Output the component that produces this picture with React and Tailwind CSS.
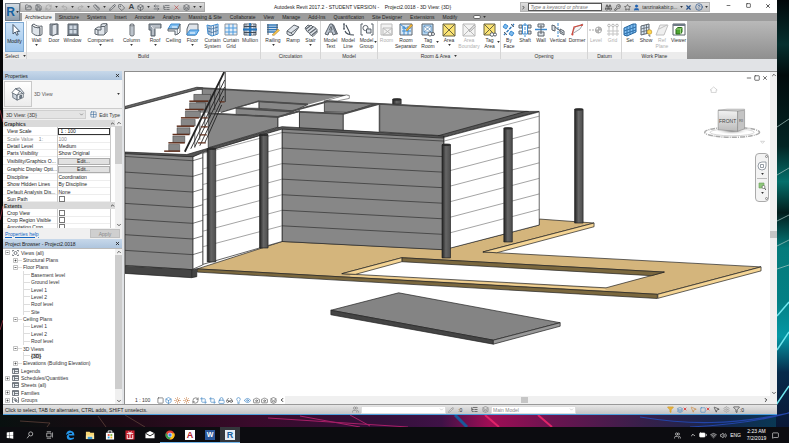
import React, { useState } from "react";
import {
    ArrowLeftRight, Battery, Binoculars, Box, Camera, ChevronDown, ChevronLeft, ChevronRight, ChevronUp,
    CircleHelp, Crop, Eye, FolderOpen, Funnel, Glasses, Grid2x2, KeyRound, Layers, Lightbulb, ListTree,
    Lock, MessageSquare, Minus, MousePointer2, Pencil, Redo2, RefreshCw, Ruler, Save, Settings,
    Square, Star, Sun, Tag, Undo2, User, Users, Volume2, Wifi, X
} from "lucide-react";

const OUT = "#5d646c";
const FILL = "#dfe4ea";
const BLUE = "#3d8bd0";

// Ribbon artwork, drawn on a 14 x 14 grid
const art = {
    modify: <path d="M5 1.500v9.500l2.200-2 1.500 3.300 1.500-.7-1.500-3.200h3z" fill="#fff" stroke="#44566b" />,
    wall: <><path d="M2 2c2 2.500 5 3 8 2.500v8C6.500 13 3.500 12 2 9.500z" fill={FILL} stroke={OUT} /><path d="M2 2l2-1c2 2 5 2.700 8 2v8.500l-2 1V4.500C7 5 4 4.500 2 2z" fill="#fff" stroke={OUT} /></>,
    door: <><path d="M3 12V1h8v11" fill="#a9b3bf" stroke={OUT} /><path d="M5 2l5-1v10l-5 2z" fill={FILL} stroke={OUT} /><path d="M3 12h2" stroke={OUT} /></>,
    window: <><path d="M2 1h10v11H2z" fill="#77828f" stroke={OUT} /><path d="M3.500 2.500h3v3.500h-3zM7.500 2.500h3v3.500h-3zM3.500 7h3v3.500h-3zM7.500 7h3v3.500h-3z" fill="#cfd8e2" /><path d="M1 12.500h12" stroke={OUT} /></>,
    component: <><path d="M1 6l3-2h3V1.500L9 .7h4v8L10 12H4l-3-1z" fill={FILL} stroke={OUT} /><path d="M1 6l3 1h3V3.500h4L13 1M4 7v5M11 3.500V11" fill="none" stroke={OUT} /></>,
    column: <><path d="M5 2v10c0 1.300 4 1.300 4 0V2z" fill={FILL} stroke={OUT} /><ellipse cx="7" cy="2" rx="2" ry="1" fill="#fff" stroke={OUT} /><path d="M7 4v8" stroke="#9aa3ad" /></>,
    roof: <><path d="M1 1h12v4H7v8H3V7H1z" fill="#929ca8" stroke={OUT} /><path d="M3 3h9M5 5v7M3 3l2 2h7" stroke="#fff" strokeWidth=".7" fill="none" /></>,
    ceiling: <><path d="M1 6l3-5h9l-2 5z" fill="#7dbcf0" stroke={BLUE} /><path d="M5 4h5" stroke="#fff" /><path d="M1 6h10v5l-3 1V8H1z" fill={FILL} stroke={OUT} /><path d="M11 6l2-5v8l-2 2" fill="#fff" stroke={OUT} /></>,
    floor: <><path d="M3 1h9v7L9 12H1V6z" fill={FILL} stroke={OUT} /><path d="M1 11l3-4h9l-3 5H1z" fill="#7dbcf0" stroke={BLUE} /><path d="M4 10h5" stroke="#fff" /></>,
    curtainSystem: <><path d="M1 2l4 1 7-2v10l-6 2-4-2z" fill="#e4effa" stroke={BLUE} /><path d="M3 2.500v9M5 3v9.500M7.500 2.500v10M10 2v9.500M1.500 5l4 1L12 4M2 8l4 1.500 6-2" fill="none" stroke="#3f6f9e" strokeWidth=".8" /></>,
    curtainGrid: <><path d="M1 1h12v11H1z" fill="#e6edf4" stroke="#8a949f" /><path d="M1 5h12M1 9h12M5 1v11M9 1v11" stroke="#4b9be0" /></>,
    mullion: <><path d="M1 1h12v11H1z" fill="#aab4c0" stroke={OUT} /><path d="M5 1v11M9.500 1v11" stroke="#fff" strokeWidth=".7" /><path d="M7 0v13M0 6.500h14" stroke="#2275bd" strokeWidth="1.800" /><path d="M1 3.500h12M1 9.500h12" stroke="#3e4a57" /></>,
    railing: <><path d="M1 2h11M1 4.300h11M1 6.600h11M1 9h9" stroke="#2d75b8" strokeWidth="1.600" /><path d="M2 1v11M11 1v8" stroke={OUT} /><path d="M6 12l6-6 1.500 1.500L8 12.500z" fill="#f2c14c" stroke="#a9803a" strokeWidth=".5" /></>,
    ramp: <><path d="M1 8l7-6 5 2-6 8-3 .7L1 11z" fill={FILL} stroke={OUT} /><path d="M1 8l4 2 2 2M5 10l8-6" stroke={OUT} fill="none" /></>,
    stair: <><path d="M1 5l3-3 2 1 1-1 2 2 1-.5 3 3v3l-4 4-3-2-1-2-2-1z" fill={FILL} stroke={OUT} /><path d="M2 6l4-3M4 8l5-4M6 10l6-4.500M8 12l5-4" stroke={OUT} strokeWidth="1.200" /></>,
    modelText: <><path d="M1 11L6 1h2l4 10-3 1-1-3H5l-1 3z" fill="#b9c2cd" stroke={OUT} /><path d="M5.500 7L7 3.500 8 7z" fill="#fff" stroke={OUT} /><path d="M8 1l1.500 1L13.500 11 12 11" fill="#7c8692" stroke={OUT} /></>,
    modelLine: <path d="M3 1v5M4 8c1 3 4 4 9 4M5 2c1 3 3 5 4 9M2 1h2M2 6h2" fill="none" stroke="#434d58" strokeWidth="1.100" />,
    modelGroup: <><path d="M3 1H1v11h2M11 1h2v11h-2" fill="none" stroke={OUT} /><circle cx="5.500" cy="5" r="2.600" fill="#fff" stroke={OUT} /><path d="M6.500 6h4.500v4H6.500z" fill={FILL} stroke={OUT} /></>,
    room: <><path d="M1 1h11v11H1z" fill="#f2f2f2" stroke="#bcbcbc" /><path d="M3 5h9v7H3zM3 5l9 7M12 5l-9 7" fill="none" stroke="#bcbcbc" /></>,
    roomSep: <><path d="M1 1h12v11H1z" fill="#d7e8f7" stroke={OUT} /><path d="M3 5h9M3 8h9M5 3v9M9 3v9M1 1l6 5" stroke={BLUE} /><path d="M7 7l5-6 1.500 1.500L8 8z" fill="#f2b437" stroke="#9c7427" strokeWidth=".5" /></>,
    tagRoom: <><path d="M1 1h11v11H1z" fill="#b5d7f3" stroke={OUT} /><path d="M3 3h7v6H3zM3 3l7 6M10 3L3 9" fill="#fff" stroke="#4b81b3" strokeWidth=".7" /><circle cx="9" cy="11" r="2" fill="#fff" stroke={OUT} /><circle cx="12" cy="11" r="1.500" fill="#fff" stroke={OUT} /></>,
    area: <path d="M1 1h12v12H1zM1 1l12 12M13 1L1 13" fill="#fbe373" stroke="#6a6443" />,
    areaBoundary: <><path d="M1 1h12v12H1zM1 1l12 12M13 1L1 13" fill="#f3f3f3" stroke="#b9b9b9" /><path d="M7 8l5-6 1.500 1.500L8 9z" fill="#ddd" stroke="#b5b5b5" /></>,
    tagArea: <><path d="M1 1h11v11H1zM1 1l11 11M12 1L1 12" fill="#fbe373" stroke="#6a6443" /><circle cx="9" cy="11.500" r="1.800" fill="#fff" stroke={OUT} /><circle cx="12" cy="11.500" r="1.500" fill="#fff" stroke={OUT} /></>,
    byFace: <><path d="M3 1l3 2-2 3-3-2zM9 8l3 2-2 3-3-2z" fill="#7dbcf0" stroke={BLUE} /><path d="M12 1L2 12" stroke="#2e76b8" strokeWidth="1.400" strokeDasharray="3 1" /><path d="M9 1l3 3M2 9l3 3" stroke={OUT} /></>,
    shaft: <><path d="M1 2h3v3H1zM1 8h3v3H1zM10 2h3v3h-3zM10 8h3v3h-3z" fill={FILL} stroke={OUT} /><path d="M7 0v14" stroke={BLUE} strokeDasharray="3 1" /><path d="M4.500 2h5v9h-5z" fill="none" stroke={BLUE} /></>,
    wallOpening: <><path d="M4 1h6v3H4zM4 9h6v4H4z" fill={FILL} stroke={OUT} /><path d="M1 6.500h12" stroke={BLUE} strokeWidth="1.500" /><path d="M7 2v9" stroke={OUT} /></>,
    vertical: <><path d="M1 2l3 1v5L1 7zM9 6l4 2v4L9 10z" fill={FILL} stroke={OUT} /><path d="M7 0v14" stroke={BLUE} strokeDasharray="3 1" /><path d="M4 4l8 6" stroke={OUT} /></>,
    dormer: <><path d="M2 11L5 4l8-3-3 5z" fill="#f6f6f6" stroke="#a4a9af" /><path d="M2 12L4 4l8-2" fill="none" stroke="#cf4b3f" strokeWidth="1.200" /><circle cx="2.500" cy="11.500" r="1" fill="#cf4b3f" /><circle cx="12" cy="2" r="1" fill="#cf4b3f" /></>,
    level: <><path d="M0 7h7" stroke="#aaa" strokeDasharray="2 1" /><circle cx="9.500" cy="7" r="3" fill="#fff" stroke="#aaa" /><path d="M9.500 4v6M6.500 7h6M9.500 4a3 3 0 013 3h-3zM9.500 10a3 3 0 01-3-3h3z" fill="#bbb" stroke="#aaa" strokeWidth=".6" /></>,
    grid: <><path d="M3 4v9M7 4v9M11 4v9M1 8h12M1 11h12" stroke="#c5c5c5" /><circle cx="3" cy="2.500" r="1.300" fill="#fff" stroke="#b5b5b5" /><circle cx="7" cy="2.500" r="1.300" fill="#fff" stroke="#b5b5b5" /><circle cx="11" cy="2.500" r="1.300" fill="#fff" stroke="#b5b5b5" /></>,
    set: <><path d="M1 5l9-4h3v8l-9 4-3-1z" fill="#7dbcf0" stroke="#24659f" /><path d="M4 4v9M7 2.500v9M10 1v9M1 8l12-4M1 11l12-4" stroke="#24659f" strokeWidth=".8" /></>,
    show: <><path d="M2 3l8-2v9l-8 2z" fill="#d9e7f3" stroke={OUT} /><path d="M5 2v9M7.500 1.500v9M2 6l8-2M2 9l8-2" stroke={OUT} strokeWidth=".8" /><circle cx="10.500" cy="9" r="2.300" fill="#ffd84f" stroke="#c29222" strokeWidth=".7" /><path d="M10 11.500v1.500h1.500" stroke={OUT} /></>,
    refPlane: <path d="M1 12L5 2h8l-4 10zM4 6l8-4" fill="#efefef" stroke="#c0c0c0" />,
    viewer: <><path d="M1 1h12v11H1z" fill="#fff" stroke={OUT} /><path d="M1 2h12" stroke="#6f7a86" strokeWidth="2" /><path d="M4 6l2-1.500h4V9L8.500 11H4z" fill="#4ea52f" stroke="#2b6b18" /><path d="M4 6h4.500v5M8.500 6L10 4.500" fill="none" stroke="#bfe6a9" strokeWidth=".7" /></>
};

const panels = [
    {
        title: "Build", tools: [
            ["wall", "Wall", "w-[19px]", 1], ["door", "Door", "w-4"], ["window", "Window", "w-[21px]"],
            ["component", "Component", "w-[35px]", 1], ["column", "Column", "w-[27px]", 1], ["roof", "Roof", "w-5", 1],
            ["ceiling", "Ceiling", "w-[17px]"], ["floor", "Floor", "w-[21px]", 1], ["curtainSystem", "Curtain\nSystem", "w-[19px]"],
            ["curtainGrid", "Curtain\nGrid", "w-[18px]"], ["mullion", "Mullion", "w-5"]
        ]
    },
    { title: "Circulation", tools: [["railing", "Railing", "w-6", 1], ["ramp", "Ramp", "w-4"], ["stair", "Stair", "w-[19px]", 1]] },
    { title: "Model", tools: [["modelText", "Model\nText", "w-[19px]"], ["modelLine", "Model\nLine", "w-4"], ["modelGroup", "Model\nGroup", "w-[21px]", 2]] },
    {
        title: "Room & Area", arrow: true, tools: [
            ["room", "Room", "w-[17px]", 0, true], ["roomSep", "Room\nSeparator", "w-[22px]"], ["tagRoom", "Tag\nRoom", "w-[22px]", 2],
            ["area", "Area", "w-5", 1], ["areaBoundary", "Area\nBoundary", "w-5", 0, true], ["tagArea", "Tag\nArea", "w-[21px]", 2]
        ]
    },
    {
        title: "Opening", tools: [
            ["byFace", "By\nFace", "w-4"], ["shaft", "Shaft", "w-4"], ["wallOpening", "Wall", "w-4"],
            ["vertical", "Vertical", "w-[18px]"], ["dormer", "Dormer", "w-5"]
        ]
    },
    { title: "Datum", tools: [["level", "Level", "w-4", 0, true], ["grid", "Grid", "w-[17px]", 0, true]] },
    { title: "Work Plane", tools: [["set", "Set", "w-4"], ["show", "Show", "w-4"], ["refPlane", "Ref\nPlane", "w-4", 0, true], ["viewer", "Viewer", "w-[17px]"]] }
];

const tabs = ["Structure", "Systems", "Insert", "Annotate", "Analyze", "Massing & Site", "Collaborate", "View",
    "Manage", "Add-Ins", "Quantification", "Site Designer", "Extensions", "Modify"];

const properties = [
    ["Graphics"],
    ["View Scale", "1 : 100", "input"],
    ["Scale Value    1:", "100", "muted"],
    ["Detail Level", "Medium"],
    ["Parts Visibility", "Show Original"],
    ["Visibility/Graphics O...", "Edit...", "button"],
    ["Graphic Display Opti...", "Edit...", "button"],
    ["Discipline", "Coordination"],
    ["Show Hidden Lines", "By Discipline"],
    ["Default Analysis Dis...", "None"],
    ["Sun Path", "", "check"],
    ["Extents"],
    ["Crop View", "", "check"],
    ["Crop Region Visible", "", "check"],
    ["Annotation Crop", "", "check"]
];

// [level, label, expander]
const tree = [
    [0, "Views (all)", "-"], [1, "Structural Plans", "+"], [1, "Floor Plans", "-"],
    [2, "Basement level"], [2, "Ground level"], [2, "Level 1"], [2, "Level 2"], [2, "Roof level"], [2, "Site"],
    [1, "Ceiling Plans", "-"], [2, "Level 1"], [2, "Level 2"], [2, "Roof level"],
    [1, "3D Views", "-"], [2, "{3D}"], [1, "Elevations (Building Elevation)", "+"],
    [0, "Legends"], [0, "Schedules/Quantities", "+"], [0, "Sheets (all)"], [0, "Families", "+"], [0, "Groups", "+"]
];

const Caret = () => <svg viewBox="0 0 4 3" className="w-[3px] h-[2px] shrink-0"><path d="M0 0h4L2 3z" fill="#333" /></svg>;

const Wallpaper = () => (
    <svg viewBox="0 0 789 443" preserveAspectRatio="none" className="absolute inset-0 w-full h-full" aria-hidden="true">
        <defs>
            <linearGradient id="bottomGlow">
                <stop offset="0" stopColor="#08100f" /><stop offset=".15" stopColor="#1c0b14" /><stop offset=".32" stopColor="#3a0a2b" />
                <stop offset=".48" stopColor="#331039" /><stop offset=".56" stopColor="#3f1247" /><stop offset=".62" stopColor="#a00d55" />
                <stop offset=".7" stopColor="#6b1450" /><stop offset=".82" stopColor="#35204a" /><stop offset=".92" stopColor="#14284f" /><stop offset="1" stopColor="#063c55" />
            </linearGradient>
            <linearGradient id="sideGlow" x2="0" y2="1">
                <stop offset="0" stopColor="#02080a" /><stop offset=".1" stopColor="#06302f" /><stop offset=".17" stopColor="#020b0c" /><stop offset=".33" stopColor="#032524" />
                <stop offset=".41" stopColor="#04706b" /><stop offset=".48" stopColor="#021d1c" /><stop offset=".56" stopColor="#057b7b" />
                <stop offset=".68" stopColor="#038085" /><stop offset=".76" stopColor="#0598a5" /><stop offset=".84" stopColor="#072b4b" /><stop offset="1" stopColor="#0a1230" />
            </linearGradient>
        </defs>
        <path d="M0 0h789v443H0z" fill="#050607" />
        <path d="M0 414h789v14H0z" fill="url(#bottomGlow)" />
        <path d="M776 0h13v443h-13z" fill="url(#sideGlow)" />
        <path d="M777 127l12-8M777 175l12-7M777 221l12-6M777 246l12-6M777 269l12-4" stroke="#a9c9c5" strokeWidth="1" opacity=".7" />
        <path d="M777 316l12-14M777 350l12-18M774 408l15-22" stroke="#6fe4ec" strokeWidth="1.500" />
        <path d="M0 110l3 12M0 220l3-14M0 330l3-10" stroke="#7c2a35" />
        <path d="M268 418l140 9M300 416l60 11M350 415l20 11" stroke="#a81f67" strokeWidth="1" fill="none" />
        <path d="M455 415l12 12" stroke="#19599a" strokeWidth="3" />
        <path d="M485 415l14 12M538 415l14 12" stroke="#e02468" strokeWidth="2" />
        <path d="M640 417c50 8 90 8 149-4M690 427c40-2 70-6 99-14" stroke="#2345a8" strokeWidth="1.200" fill="none" />
        <path d="M20 421l30 2-3 4M98 416l8 11M125 415l20 12" stroke="#5c4038" strokeWidth=".8" fill="none" />
    </svg>
);

const RibbonTool = ({ tool }) => {
    const [icon, label, width, arrow, disabled] = tool;
    return (
        <button disabled={disabled} className={`${width} relative flex flex-col items-center shrink-0 pt-0.5 whitespace-pre ${disabled ? "text-[#b0b0b0]" : "text-[#333]"}`}>
            <svg viewBox="0 0 14 14" className="w-[14px] h-[14px] shrink-0" fill="none">{art[icon]}</svg>
            <span className="text-center">{label}</span>
            {arrow === 1 && <span className="pt-px"><Caret /></span>}
            {arrow === 2 && <span className="absolute right-0 bottom-[9px]"><Caret /></span>}
        </button>
    );
};

const Header = () => (
    <header className="flex h-[21px] shrink-0 bg-white">
        <button aria-label="Application menu" className="mt-[3px] ml-0.5 w-[15px] h-[18px] shrink-0 bg-gradient-to-b from-[#d3dbe3] to-[#8e9dac] border border-[#6f7c89] flex items-center justify-center gap-px">
            <span className="text-[12px] leading-[14px] font-bold text-[#14609f]">R</span>
            <Caret />
        </button>
        <div className="flex-1 flex flex-col min-w-0">
            <div className="h-[13px] flex items-center">
                <div className="mt-px h-[10px] w-[185px] shrink-0 pl-1 pr-0.5 flex items-center justify-between bg-gradient-to-b from-[#dcdcdc] to-[#b9b9b9] border border-[#a9a9a9] text-[#3f454b]">
                    <FolderOpen size={7} /><Save size={7} /><RefreshCw size={7} className="text-[#999]" /><Caret />
                    <Undo2 size={7} className="text-[#999]" /><Caret /><Redo2 size={7} className="text-[#999]" /><Caret />
                    <Ruler size={7} /><Caret /><Pencil size={7} /><Tag size={7} /><b className="text-[8px] leading-[8px]">A</b>
                    <Box size={7} /><Caret /><ArrowLeftRight size={7} /><ListTree size={7} />
                    <X size={7} className="text-[#b33]" /><Layers size={7} /><Caret /><Caret />
                </div>
                <h1 className="flex-1 text-center whitespace-pre text-[#222]">Autodesk Revit 2017.2 - STUDENT VERSION -    Project2.0018 - 3D View: {"{3D}"}</h1>
                <div className="mt-px h-[10px] w-[190px] shrink-0 flex items-center justify-between pr-px bg-gradient-to-b from-[#dedede] to-[#c2c2c2] border border-[#b5b5b5] text-[#333]">
                    <ChevronRight size={5} strokeWidth={4} />
                    <input aria-label="Search help" placeholder="Type a keyword or phrase" className="w-[74px] h-2 pl-px bg-white border border-[#555] italic placeholder:text-[#777]" />
                    <Binoculars size={7} /><KeyRound size={7} /><Star size={7} /><User size={7} className="text-[#1c5fb0]" fill="#1c5fb0" />
                    <span>tanzinakabir.p...</span><Caret />
                    <X size={7} strokeWidth={4} className="text-[#25508a]" /><CircleHelp size={8} className="text-[#25508a]" /><Caret />
                </div>
                <div className="w-[67px] shrink-0 h-full pl-4 pr-1.5 pb-0.5 flex items-center justify-between text-[#222]">
                    <button aria-label="Minimize"><Minus size={5} strokeWidth={3} /></button>
                    <button aria-label="Maximize"><Square size={5} strokeWidth={3} /></button>
                    <button aria-label="Close"><X size={6} strokeWidth={3} /></button>
                </div>
            </div>
            <nav className="h-2 pl-0.5 flex items-center gap-2 bg-[#9c9c9c] text-[#222] whitespace-nowrap">
                <a href="#architecture" className="h-full px-[3px] -mr-1 bg-[#f2f2f2] leading-[8px]">Architecture</a>
                {tabs.map((t) => <a key={t} href={`#${t}`}>{t}</a>)}
                <button aria-label="Ribbon display" className="ml-2 flex items-center gap-0.5"><span className="w-2 h-1 rounded-full bg-white border border-[#666]" /><Caret /></button>
            </nav>
        </div>
    </header>
);

const Ribbon = () => (
    <section className="h-[38px] shrink-0 flex bg-gradient-to-b from-[#b9b9b9] to-[#8f8f8f]">
        <div className="w-6 shrink-0 flex flex-col bg-white border-r border-[#d5d5d5]">
            <button className="h-[30px] mt-px mx-0.5 flex flex-col items-center bg-gradient-to-b from-[#cfe4f8] to-[#9cc4ea] border border-[#7da9d3] text-[#222]">
                <svg viewBox="0 0 14 14" className="w-[14px] h-[14px] mb-px shrink-0">{art.modify}</svg>Modify
            </button>
            <span className="mt-auto h-[7px] px-0.5 flex items-center gap-1 bg-[#ececec]">Select <Caret /></span>
        </div>
        {panels.map((p) => (
            <div key={p.title} className="flex flex-col bg-white border-r border-[#d5d5d5] last:border-r-0">
                <div className="flex flex-1 min-h-0">{p.tools.map((t) => <RibbonTool key={t[0]} tool={t} />)}</div>
                <span className="h-[7px] shrink-0 flex items-center justify-center gap-1 bg-[#ececec]">{p.title}{p.arrow && <Caret />}</span>
            </div>
        ))}
    </section>
);

const PanelTitle = ({ children }) => (
    <div className="h-[9px] shrink-0 px-0.5 flex items-center justify-between bg-gradient-to-b from-[#c7d8ea] to-[#aec5de] text-[#222]">
        <h2>{children}</h2>
        <button aria-label={`Close ${children}`}><X size={5} strokeWidth={4} /></button>
    </div>
);

const ScrollBar = ({ children }) => (
    <div className="w-[7px] shrink-0 bg-[#f0f0f0] flex flex-col items-center text-[#333]">
        <ChevronUp size={6} strokeWidth={3} className="shrink-0" />
        {children}
        <ChevronDown size={6} strokeWidth={3} className="mt-auto shrink-0" />
    </div>
);

const PropertyValue = ({ name, value, kind }) => {
    const [on, setOn] = useState(false);
    if (kind === "input") return <input aria-label={name} defaultValue={value} className="block w-full h-[7px] px-0.5 border border-[#333] bg-white" />;
    if (kind === "button") return <button className="block w-full h-[7px] leading-[5px] bg-[#e1e1e1] border border-[#adadad]">{value}</button>;
    if (kind === "check") return <input type="checkbox" aria-label={name} checked={on} onChange={() => setOn(!on)} className="block ml-px w-[6px] h-[6px] appearance-none border border-[#777] bg-white" />;
    return <span className="px-px">{value}</span>;
};

const Properties = () => (
    <section className="h-[168px] shrink-0 flex flex-col bg-[#f0f0f0]">
        <PanelTitle>Properties</PanelTitle>
        <div className="h-[29px] shrink-0 p-px pr-0.5 flex items-center gap-0.5 bg-[#f5f5f5] border-b border-[#ccc] text-[#555]">
            <span className="w-7 h-full flex items-center justify-center bg-gradient-to-b from-white to-[#ececec] border border-[#c9c9c9]">
                <svg viewBox="0 0 16 16" className="w-[14px] h-[14px]" stroke="#45505c" strokeWidth=".8" strokeLinejoin="round">
                    <path d="M2 6v6l5 3V9z" fill="#cfd6de" />
                    <path d="M7 9v6l7-3V7z" fill="#eef1f4" />
                    <path d="M1 6.500L5 2l5 2.500L7 9.500z" fill="#fff" />
                    <path d="M5 2l5-1 5 6-1 1-4-3.500z" fill="#dfe5ec" />
                    <path d="M10 10l2-.8v3l-2 .8z" fill="#7e8a98" />
                </svg>
            </span>
            <span>3D View</span>
            <span className="ml-auto"><Caret /></span>
        </div>
        <div className="h-[11px] shrink-0 flex items-center gap-1 pr-0.5">
            <div className="relative flex-1 flex items-center">
                <select aria-label="Instance" className="w-full h-[9px] px-0.5 appearance-none bg-[#e4e4e4] border border-[#cfcfcf]"><option>3D View: {"{3D}"}</option></select>
                <ChevronDown size={5} className="absolute right-0.5 pointer-events-none" />
            </div>
            <button className="flex items-center gap-0.5 whitespace-nowrap"><Grid2x2 size={7} className="text-[#3c6c9c]" />Edit Type</button>
        </div>
        <div className="flex-1 min-h-0 flex overflow-hidden">
            <div className="flex-1 overflow-hidden bg-white">
                <table className="w-full h-[111px] table-fixed border-collapse whitespace-pre">
                    <colgroup><col /><col className="w-[53px]" /><col className="w-[5px]" /></colgroup>
                    <tbody>
                        {properties.map(([name, value, kind]) => value === undefined ? (
                            <tr key={name} className="bg-[#dadada]">
                                <th colSpan={2} className="p-0 pl-px text-left font-semibold leading-[6px]">{name}</th>
                                <td className="p-0"><ChevronUp size={5} strokeWidth={4} /></td>
                            </tr>
                        ) : (
                            <tr key={name} className={kind === "muted" ? "text-[#888]" : "text-[#222]"}>
                                <th className="p-0 pl-1 text-left font-normal leading-[6px] overflow-hidden shadow-[inset_0_-1px_0_#ededed]">{name}</th>
                                <td className="p-0 leading-[6px] border-l border-[#c9c9c9] shadow-[inset_0_-1px_0_#ededed]"><PropertyValue name={name} value={value} kind={kind} /></td>
                                <td className="p-0 border-l border-[#c9c9c9]" />
                            </tr>
                        ))}
                    </tbody>
                </table>
            </div>
            <ScrollBar><span className="w-full h-[38px] bg-[#cdcdcd]" /></ScrollBar>
        </div>
        <div className="h-[11px] shrink-0 px-0.5 flex items-center justify-between">
            <a href="#help" className="underline text-[#1367c4]">Properties help</a>
            <button disabled className="w-[30px] h-[9px] bg-[#cfcfcf] border border-[#c0c0c0] text-[#888]">Apply</button>
        </div>
    </section>
);

const Expander = ({ sign }) => (
    <span className="w-[5px] h-[5px] shrink-0 flex items-center justify-center">
        {sign && <svg viewBox="0 0 5 5" className="w-[5px] h-[5px]"><path d="M.5.5h4v4h-4z" fill="#fff" stroke="#aaa" strokeWidth=".7" /><path d={sign === "+" ? "M1.500 2.500h2M2.500 1.500v2" : "M1.500 2.500h2"} stroke="#333" strokeWidth=".7" /></svg>}
    </span>
);

const TreeIcon = ({ name }) => (
    <svg viewBox="0 0 7 6" className="w-[7px] h-[6px] shrink-0" fill="none" stroke="#59616a" strokeWidth=".8">
        {name.startsWith("Views") ? <><path d="M2 .5H.5v1M5 .5h1.500v1M.5 4.500v1H2M6.500 4.500v1H5" /><circle cx="3.500" cy="3" r="1.500" /></>
            : name === "Groups" ? <><path d="M1.500.5h-1v5h1M5.500.5h1v5h-1" /><circle cx="3" cy="2.500" r="1" /><path d="M3.500 3h1.500v1.500H3.500z" /></>
                : <><path d="M.5.5h6v5h-6z" fill="#e9edf1" /><path d="M.5 1.500h6M2.500 1.500v4M2.500 3.500h4" /></>}
    </svg>
);

const ProjectBrowser = () => (
    <section className="flex-1 min-h-0 flex flex-col">
        <PanelTitle>Project Browser - Project2.0018</PanelTitle>
        <div className="flex-1 min-h-0 flex bg-white border-t border-[#bbb]">
            <ul className="flex-1 min-w-0 flex flex-col text-[#333] whitespace-nowrap">
                {tree.map(([level, label, sign], i) => (
                    <li key={i} className="flex-1 flex items-center">
                        {level === 0 && <span className="pl-0.5 pr-[2px] flex items-center gap-0.5"><Expander sign={sign} /><TreeIcon name={label} /></span>}
                        {level === 1 && <span className="pl-2.5 pr-px flex items-center"><Expander sign={sign} /><span className="w-1 h-px bg-[#ddd]" /></span>}
                        {level === 2 && <span className="ml-5 mr-px w-[7px] h-full border-l border-[#ddd] flex items-center"><span className="w-1.5 h-px bg-[#ddd]" /></span>}
                        <span className={label === "{3D}" ? "font-bold bg-[#e4e4e4]" : ""}>{label}</span>
                    </li>
                ))}
            </ul>
            <ScrollBar><span className="w-full h-[134px] bg-[#cdcdcd]" /></ScrollBar>
        </div>
    </section>
);

// left x, top y, height
const columns = [[206.5, 149, 113.5], [259, 135, 113.5], [442, 145, 113.5], [504, 128.5, 114], [575, 109.5, 114], [392.5, 99.500, 4.500]];
const courses = [0, 1, 2, 3, 4, 5, 6];

const Model = () => (
    <svg viewBox="124 72 646 325" preserveAspectRatio="xMinYMin meet" className="absolute inset-0 w-full h-full" role="img" aria-label="3D view of the building model">
        <defs>
            <linearGradient id="round"><stop offset="0" stopColor="#222" /><stop offset=".45" stopColor="#666" /><stop offset="1" stopColor="#4d4d4d" /></linearGradient>
            <linearGradient id="cube" x2="0" y2="1"><stop offset="0" stopColor="#f2f2f2" /><stop offset="1" stopColor="#bbb" /></linearGradient>
            <radialGradient id="cubeShadow"><stop offset="0" stopColor="#777" /><stop offset="1" stopColor="#fff" stopOpacity="0" /></radialGradient>
        </defs>
        <g stroke="#222" strokeWidth=".7" strokeLinejoin="round">
            {/* timber deck */}
            <path d="M196.500 269.500L281.700 242l162.300 8 95.500-24.500v-6l55 4L483 252.500l279 15L658 295z" fill="#d4b57c" />
            <path d="M594.500 223.500v3.700L497 253.300 483 252.500z" fill="#f5d595" />
            <path d="M762 267.500v4L658.500 299v-4z" fill="#f5d595" />
            <path d="M196.500 269.500L658 295v4.200L196.500 272.700z" fill="#7b683e" />
            <path d="M341.500 274.300l60.200-16L665 272.700l-58.500 15.800z" fill="#fff" />
            <path d="M401.700 258.300L665 272.700l-13 3.600-250.300-14z" fill="#7b683e" />
            <path d="M341.500 274.300l60.200-16v4L355 275z" fill="#f5d595" />
            <path d="M350 276.300l256 14" stroke="#f5d595" strokeWidth="1.300" />

            {/* slab */}
            <path d="M330.500 311l68-17.500 162 30-67 17.500z" fill="#848484" />
            <path d="M330.500 311l163 30v4l-163-29.500z" fill="#444" />
            <path d="M493.500 341l67-17.500v3.500l-67 18z" fill="#999" />

            {/* rooms seen over the walls */}
            <path d="M124 106.500L196 87.300l6 .5v1.500l-5 .2L124 109z" fill="#666" />
            <path d="M201.500 88.500L339 96l-31 8.500-50-3.500-38 12h-22L193 94.500h8.500z" fill="#878787" stroke="none" />
            <path d="M201.500 89v5.500" />
            <path d="M235 108l23.500-6.500v7z" fill="#fff" />
            <path d="M258.500 101.500l49 3-14 6.500-35-2.500z" fill="#878787" />
            <path d="M235 108l58 3.500-15 6-43-3z" fill="#878787" />
            <path d="M212 114l23-6v6.500z" fill="#fff" stroke="none" />
            <path d="M207.500 113.300l70 4v10L207.500 148z" fill="#878787" />
            <path d="M277.500 117.300l21.500-5.500v17l-21.500-1z" fill="#fff" />
            <path d="M299 112l44 1.700v17l-44-2z" fill="#878787" />
            <path d="M314 104l10-2.500v10.500l-11-.5z" fill="#fff" stroke="none" />
            <path d="M324 101l50 3-26 8.500-24-.5z" fill="#878787" />
            <path d="M343 113.700l36-10v29l-36-2z" fill="#fff" />
            <path d="M379.500 104L526 112l-82 24-64.500-4z" fill="#878787" />
            {/* wall caps */}
            <g fill="none" stroke="#4c4c4c" strokeWidth="1.700">
                <path d="M196 88l152 8M258.500 101.500l49 3M235 108.300l58 3.500M207.500 113.500l70 3.500 22-6" />
                <path d="M348 96l-56 15M299 112l44 2 36-10M324 101.500l55 2.500 150 8" />
                <path d="M220 112.500l38.500-11.500" strokeWidth="1.200" />
            </g>
            <path d="M326 100.500l20-5.500 3 .5v3l-12 2.500z" fill="#fff" strokeWidth=".5" />
            <path d="M526 111.500h13.500L444 137.500l-6-1.500z" fill="#555" />

            {/* long walls */}
            <path d="M281.500 128l162.500 9v113.300L281.500 242z" fill="#878787" />
            <path d="M444 137.500L539.500 112v113.500L444 250.300z" fill="#fff" />
            <path d="M202 153l79.500-24.500V242L202 265z" fill="#fff" />
            <path d="M202 153v112.500l-10 4.300V157z" fill="#fff" />
            <path d="M124 153l68 3.800v113.500L124 266z" fill="#878787" />
            <path d="M124 266.500l67.700 3.800 4.300-1v8l-5.300 1L124 274z" fill="#444" />
            <path d="M191 270.300v8" />
            <path d="M124 152.300l62 2.500 95.500-28 162 9.500v2l-162-9L202 152.300l-10 4.700-68-3z" fill="#555" />
            {courses.map((i) => (
                <g key={i} strokeWidth=".6" fill="none">
                    <path d={`M281.500 ${132.700 + i * 15.600}L444 ${141.300 + i * 15.600}`} />
                    <path d={`M444 ${141.300 + i * 15.600}L539.500 ${116.300 + i * 15.600}`} stroke="#666" />
                    <path d={`M202 ${153.700 + i * 15.600}L281.500 ${132.700 + i * 15.600}`} stroke="#666" />
                    <path d={`M124 ${156.700 + i * 15.700}L192 ${161 + i * 15.700}L202 ${158 + i * 15.700}`} />
                </g>
            ))}

            {/* stair */}
            {courses.map((i) => (
                <g key={i}>
                    <path d={`M${193 - i * 4.200} ${101 + i * 8.350}h${17 - i}v-6.500h${i - 17}z`} fill="#878787" strokeWidth=".4" />
                    <path d={`M${188.500 - i * 4.200} ${101.300 + i * 8.350}h${19 - i * .5}`} stroke="#5f2f1d" strokeWidth="1.500" />
                </g>
            ))}
            <path d="M223.500 72L184 152" strokeWidth="1.800" />
            <path d="M224.500 72v30M224 80L190 149M224 87l-30 60M223 96l-24 50M221 105l-17 38" fill="none" strokeWidth=".9" />
            <path d="M219 82v20M214 91v19M209 101v17M204 111v17M199 121v19M194 131v17" strokeWidth=".7" />
            <path d="M207 118h-6M207 127h-7M206 135h-7M205 143h-8M224 102h-5" stroke="#5f2f1d" strokeWidth="1.200" />

            {columns.map(([x, y, h]) => (
                <g key={x}>
                    <path d={`M${x} ${y}h8.500v${h}h-8.500z`} fill="url(#round)" />
                    <ellipse cx={x + 4.250} cy={y} rx="4.250" ry=".8" fill="#333" />
                </g>
            ))}
        </g>
        {/* view cube */}
        <ellipse cx="733" cy="132.500" rx="27.500" ry="5" fill="none" stroke="#aaa" strokeWidth="1.500" strokeDasharray="5 1 1 1" />
        <ellipse cx="733" cy="132.500" rx="22" ry="3.500" fill="#fff" stroke="#bbb" strokeWidth=".6" />
        <ellipse cx="733" cy="131" rx="17" ry="4" fill="url(#cubeShadow)" />
        <path d="M719 110.500l19.500.5v20.500l-19.500-1.500z" fill="url(#cube)" stroke="#888" strokeWidth=".6" />
        <path d="M738.500 111l7-.5v18.500l-7 2.500z" fill="#c4c4c4" stroke="#888" strokeWidth=".6" />
        <path d="M719 110.300l9-1h17.500v1l-7 .7z" fill="#ddd" stroke="#888" strokeWidth=".5" />
        <text x="728.500" y="123.500" textAnchor="middle" fontSize="5" fill="#444">FRONT</text>
        <text x="742" y="122.500" textAnchor="middle" fontSize="4" fill="#555">RI</text>
        <path d="M711 90l3.500-3 3.500 3h-1v2.500h-5V90z" fill="none" stroke="#bbb" strokeWidth=".6" />
        <path d="M761.500 141.500h4l-2 2z" fill="#fff" stroke="#bbb" strokeWidth=".6" />
    </svg>
);

const viewTools = [Square, Box, Sun, Sun, RefreshCw, Crop, Crop, Lock, Glasses, Lightbulb, Eye, Camera, Camera, Layers];

const ModelView = () => (
    <main className="flex-1 min-w-0 flex flex-col border-l border-t border-[#8d8d8d]">
        <div className="flex-1 min-h-0 flex">
            <div className="relative flex-1 bg-white overflow-hidden">
                <Model />
                <div className="absolute top-[3px] right-0.5 flex gap-0.5 text-[#444]">
                    <Minus size={6} strokeWidth={3} /><Square size={6} strokeWidth={3} /><X size={6} strokeWidth={3} />
                </div>
                <div className="absolute top-[81px] right-px w-[14px] h-[49px] py-px flex flex-col items-center justify-between bg-[#f3f3f3] border border-[#aaa] rounded-sm">
                    <span className="self-end w-[3px] h-[3px] rounded-full border border-[#888]" />
                    <button aria-label="Steering wheel">
                        <svg viewBox="0 0 10 10" className="w-[10px] h-[10px]" fill="#fff" stroke="#7c8590" strokeWidth=".8"><path d="M9 1v4a4 4 0 11-4-4z" /><path d="M3.500 3.500h3v3h-3z" /></svg>
                    </button>
                    <Caret />
                    <span className="w-2.5 h-px bg-[#bbb]" />
                    <button aria-label="Zoom region">
                        <svg viewBox="0 0 8 8" className="w-2 h-2"><path d="M1 1h5v5H1z" fill="#8fc77b" stroke="#6a9e58" strokeWidth=".6" /><circle cx="5.500" cy="5" r="1.500" fill="#fff" stroke="#555" strokeWidth=".6" /><path d="M6.500 6L8 8" stroke="#555" /></svg>
                    </button>
                    <Caret />
                    <span className="self-end w-[3px] h-[3px] rounded-full border border-[#888]" />
                </div>
            </div>
            <div className="w-[7px] shrink-0 bg-[#f0f0f0] flex flex-col items-center justify-between text-[#333]">
                <ChevronUp size={6} strokeWidth={3} />
                <span className="w-full h-[7px] bg-[#c6c6c6]" />
                <ChevronDown size={6} strokeWidth={3} />
            </div>
        </div>
        <div className="h-2 shrink-0 flex items-center bg-[#f0f0f0] text-[#333]">
            <div className="h-full w-[160px] pl-2.5 flex items-center justify-between bg-white">
                <span className="w-5">1 : 100</span>
                {viewTools.map((Icon, i) => <button key={i} aria-label={`View control ${i + 1}`}><Icon size={7} className={i % 4 === 0 || i > 10 ? "text-[#444]" : i === 2 || i === 3 ? "text-[#c06a2a]" : "text-[#2d78bd]"} /></button>)}
                <ChevronLeft size={6} strokeWidth={4} />
            </div>
            <div className="flex-1 h-full flex items-center justify-center"><span className="w-[7px] h-[6px] bg-[#c6c6c6]" /></div>
            <ChevronRight size={6} strokeWidth={4} className="mr-2" />
        </div>
    </main>
);

const StatusSelect = ({ label, value }) => (
    <div className="relative flex items-center">
        <select aria-label={label} className="w-[85px] h-2 px-px appearance-none bg-white border border-[#ddd] text-[#888]"><option>{value}</option></select>
        <ChevronDown size={5} className="absolute right-0.5 text-[#999] pointer-events-none" />
    </div>
);

const StatusBar = () => (
    <footer className="h-[10px] shrink-0 flex items-center bg-gradient-to-b from-[#e6e6e6] to-[#c4c4c4] border-t border-[#999] text-[#222]">
        <span className="w-[349px] pl-0.5">Click to select, TAB for alternates, CTRL adds, SHIFT unselects.</span>
        <Users size={7} className="mr-0.5 shrink-0 text-[#777]" />
        <StatusSelect label="Workset" value=" " />
        <div className="w-[45px] px-0.5 flex items-center justify-between"><Pencil size={6} className="text-[#888]" /><span>:0</span><span /><ListTree size={7} /><Layers size={7} className="text-[#777]" /></div>
        <StatusSelect label="Design option" value="Main Model" />
        <div className="ml-auto mr-[33px] w-[77px] flex items-center justify-between">
            <Funnel size={7} className="text-[#d09a28]" fill="#e8b33d" />
            <span className="flex"><Layers size={6} className="text-[#2d78bd]" /><X size={4} strokeWidth={5} className="text-[#d33]" /></span>
            <MousePointer2 size={7} className="text-[#c9802e]" />
            <span className="flex"><Square size={6} className="text-[#2d78bd]" /><X size={4} strokeWidth={5} className="text-[#d33]" /></span>
            <MousePointer2 size={7} /><Settings size={7} className="text-[#999]" />
            <span className="flex items-center"><Funnel size={7} />:0</span>
        </div>
    </footer>
);

const taskIcons = [
    <path d="M1 2l4-.5v4H1zM5.500 1.500L10 1v4.500H5.500zM1 6h4v4l-4-.5zM5.500 6H10v4.500l-4.500-.5z" fill="#fff" />,
    <><circle cx="6.500" cy="4" r="2.800" fill="none" stroke="#ddd" /><path d="M4.500 6L1.500 10" stroke="#ddd" /></>,
    <path d="M1 3h6v5H1zM9 2v7M1 1h6M1 10h6" fill="none" stroke="#ccc" />,
    <path d="M1 5.500C1.500 2 4 .5 6 .7c3 .2 4.500 2.500 4.300 5.300H4.200c0 3 3.500 3.500 5.500 2v2C5.500 12 1.500 10.500 2 7c.3-1.700 1.500-2.500 2.500-3C3 4 2 4.500 1 5.500zM4.300 4.500h3.500c0-2-3-2-3.500 0z" fill="#2596ea" fillRule="evenodd" />,
    <><path d="M1 2h4l1 1h4v7H1z" fill="#f8d775" /><path d="M1 6h9v4H1z" fill="#fbe9a6" /><path d="M3 7.500h5V10H3z" fill="#3c9bd9" /></>,
    <><path d="M1 3h9v7.500H1z" fill="#fff" /><path d="M3.500 3V1h4v2" fill="none" stroke="#fff" /><path d="M3 4.500h2v2H3z" fill="#e8503a" /><path d="M6 4.500h2v2H6z" fill="#7db93d" /><path d="M3 7.200h2v2H3z" fill="#2aa0dd" /><path d="M6 7.200h2v2H6z" fill="#f4b922" /></>,
    <><path d="M.5.5h10v10H.5z" fill="#c8202f" /><path d="M2 4h7M2.500 5.500v4h6v-4M5.500 3.500v6M5.500 3.500L3.500 2M5.500 3.500l2-1.500" fill="none" stroke="#fff" /></>,
    <><path d="M.5 3.500L5.500 1l5 2.500V9h-10z" fill="#fff" /><path d="M.5 3.500l5 3 5-3" fill="none" stroke="#111" /></>,
    <><circle cx="5.500" cy="5.500" r="5" fill="#e34133" /><path d="M1.200 3A5 5 0 005 10.500L7.500 6.500h-4z" fill="#2fa350" /><path d="M5.500 3.500h4.700A5 5 0 015 10.500l2.500-4z" fill="#fbc316" /><circle cx="5.500" cy="5.500" r="2.200" fill="#4484f0" stroke="#fff" strokeWidth=".7" /></>
];

const Taskbar = () => (
    <div className="relative h-4 shrink-0 flex items-center bg-[#0c0c10] text-white">
        {taskIcons.map((icon, i) => (
            <button key={i} aria-label={`Task ${i + 1}`} className={`w-5 h-full flex items-center justify-center ${i === 8 ? "border-b border-[#76b9ed]" : ""}`}>
                <svg viewBox="0 0 11 11" className={i < 3 ? "w-2 h-2" : "w-[10px] h-[10px]"}>{icon}</svg>
            </button>
        ))}
        <button className="w-5 h-full flex items-center justify-center border-b border-[#76b9ed]"><b className="w-[10px] h-[10px] bg-white text-[#b3202c] text-[9px] leading-[10px]">A</b></button>
        <button className="w-5 h-full flex items-center justify-center border-b border-[#76b9ed]"><b className="w-[10px] h-[10px] bg-[#2b579a] text-white text-[7px] leading-[10px]">W</b></button>
        <button className="w-5 h-full flex items-center justify-center border-b border-[#76b9ed] bg-[#33363b]"><b className="w-[10px] h-[10px] bg-[#e5edf5] text-[#14609f] text-[9px] leading-[10px]">R</b></button>
        <div className="ml-auto pr-2.5 flex items-center gap-[3px]">
            <Users size={7} className="mr-1.5" /><ChevronUp size={6} strokeWidth={3} /><Battery size={8} fill="#fff" /><Wifi size={7} /><Volume2 size={7} />
            <span>ENG</span>
            <time className="w-[25px] text-center leading-[7px]">2:23 AM<br />7/2/2019</time>
            <MessageSquare size={7} />
        </div>
    </div>
);

const App = () => (
    <div className="relative h-screen flex flex-col overflow-hidden bg-black font-['Liberation_Sans',sans-serif] text-[5px] leading-[6px] text-[#333]">
        <Wallpaper />
        <div className="relative flex-1 min-h-0 ml-[3px] mr-3 mb-3 flex flex-col bg-[#e1e3e6] border-b border-[#4d9fdc]">
            <Header />
            <Ribbon />
            <div className="h-3 shrink-0 bg-[#e1e3e6]" />
            <div className="flex-1 min-h-0 flex gap-0.5">
                <aside className="w-[119px] shrink-0 flex flex-col">
                    <Properties />
                    <ProjectBrowser />
                </aside>
                <ModelView />
            </div>
            <StatusBar />
        </div>
        <Taskbar />
    </div>
);

export default App;
